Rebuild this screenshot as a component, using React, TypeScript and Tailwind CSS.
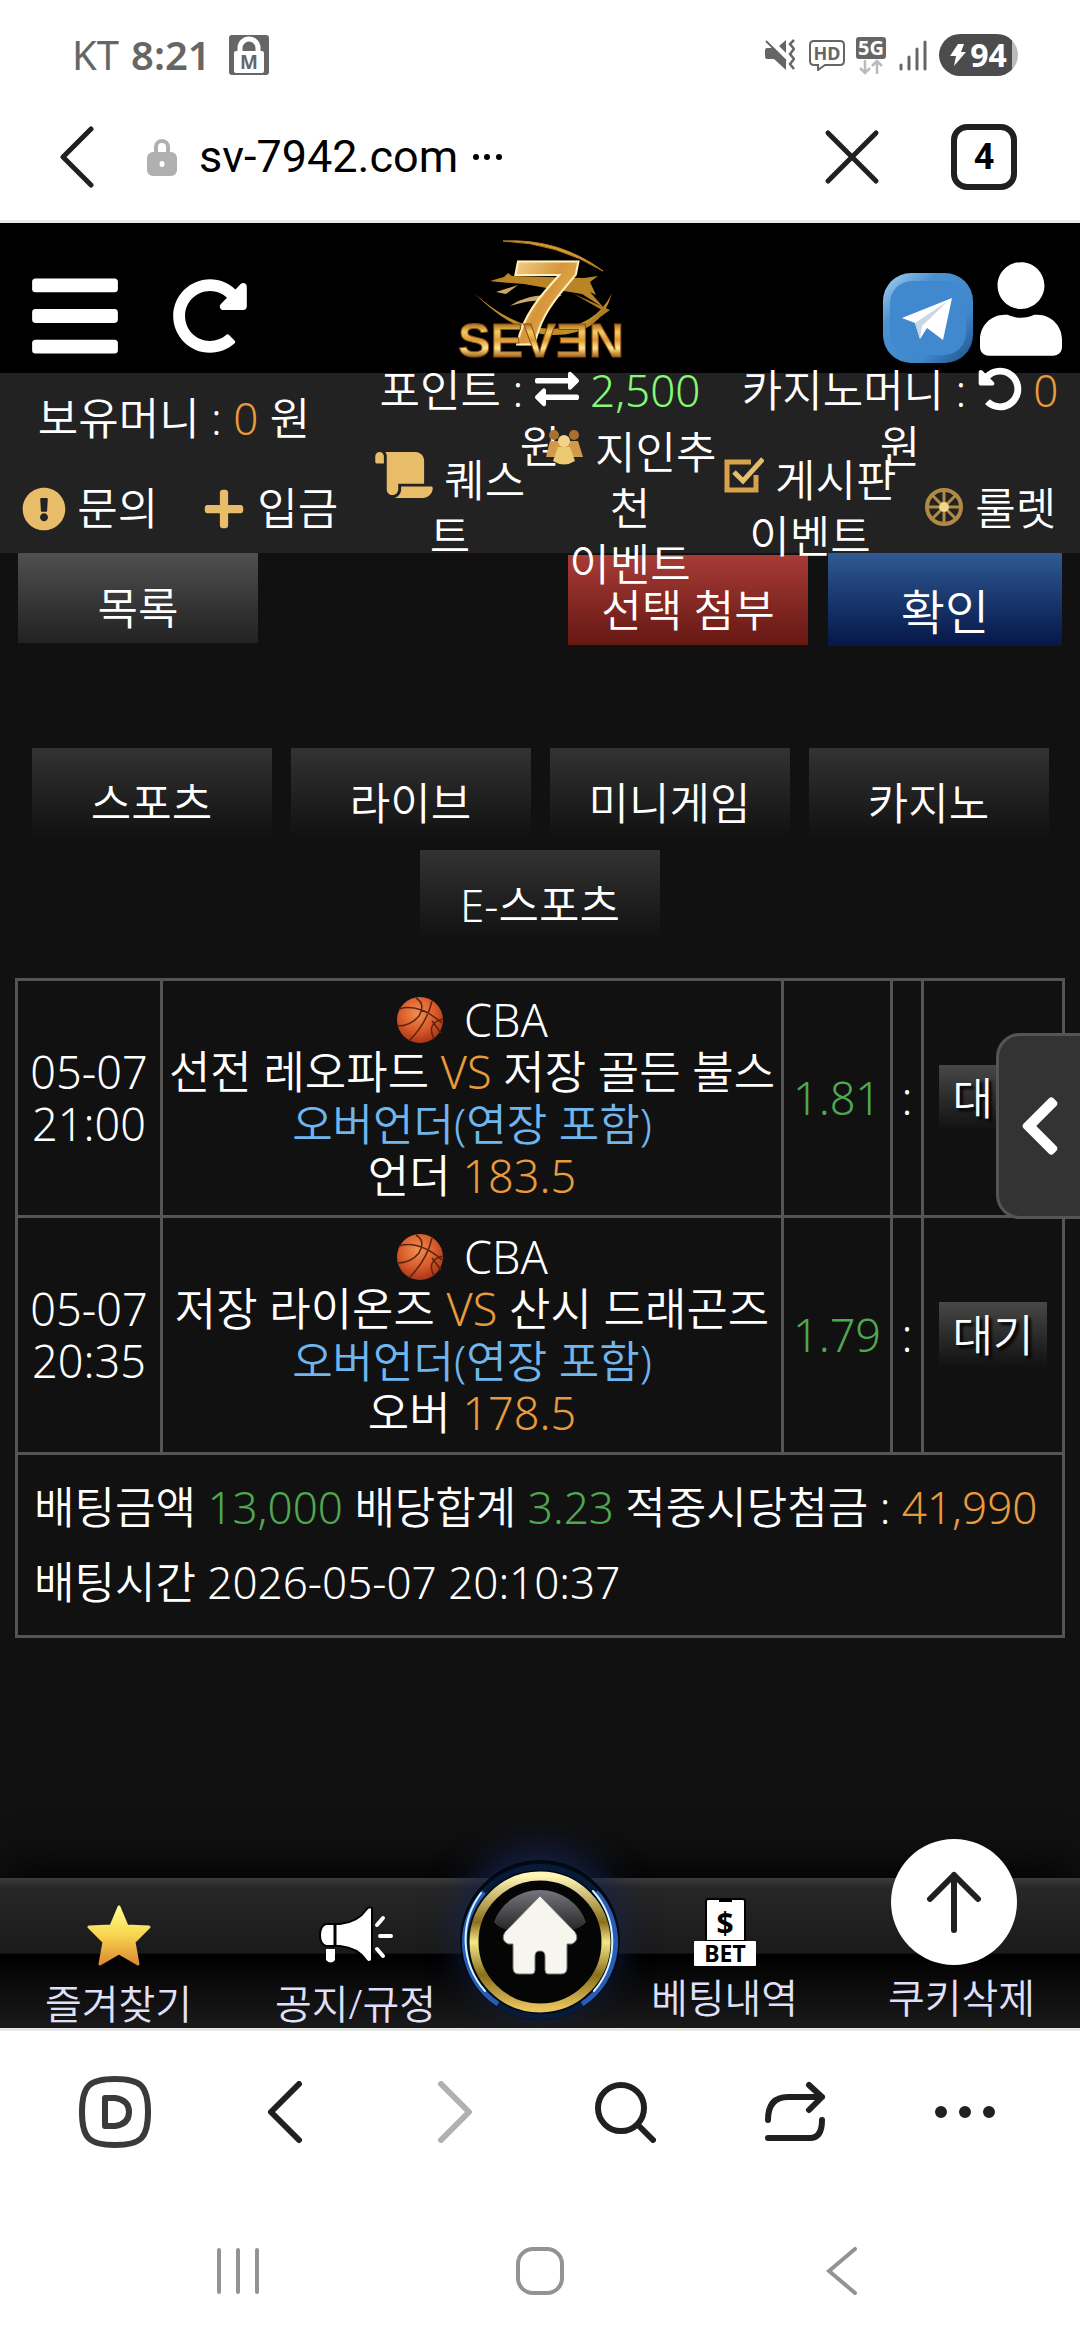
import type { ReactNode } from "react";
import {
  FaBars,
  FaChevronLeft,
  FaExchangeAlt,
  FaExclamationCircle,
  FaPlus,
  FaRedoAlt,
  FaScroll,
  FaUndoAlt,
  FaUser,
} from "react-icons/fa";

const bets = [
  {
    date: "05-07",
    time: "21:00",
    league: "CBA",
    home: "선전 레오파드",
    away: "저장 골든 불스",
    market: "오버언더(연장 포함)",
    pick: "언더",
    line: "183.5",
    odds: "1.81",
    status: "대기",
  },
  {
    date: "05-07",
    time: "20:35",
    league: "CBA",
    home: "저장 라이온즈",
    away: "산시 드래곤즈",
    market: "오버언더(연장 포함)",
    pick: "오버",
    line: "178.5",
    odds: "1.79",
    status: "대기",
  },
];

const categories = ["스포츠", "라이브", "미니게임", "카지노", "E-스포츠"];

function StatusBar() {
  return (
    <div className="flex h-[110px] items-center justify-between pr-[62px] pl-[72px] text-[#666]">
      <div className="flex items-center text-[40px] leading-[48px]">
        <span>KT</span>
        <span className="ml-3 font-semibold">8:21</span>
        <svg className="ml-[18px] size-10" viewBox="0 0 40 40">
          <rect width="40" height="40" rx="3" fill="#666" />
          <path d="M11 18v-5a9 9 0 0 1 18 0v5" fill="none" stroke="#fff" strokeWidth="5" />
          <rect x="5" y="16" width="30" height="22" rx="2" fill="#fff" />
          <text x="20" y="34" fontSize="19" fontWeight="700" textAnchor="middle" fill="#666">M</text>
        </svg>
      </div>
      <div className="flex items-center">
        <svg className="h-8 w-[30px]" viewBox="0 0 30 32" fill="#666">
          <path d="M2 9h7l12 12v10L9 20H2q-2 0-2-3v-5q0-3 2-3z" />
          <path d="M21 1v13l-7-7z" />
          <path d="M1 2l20 20" stroke="#666" strokeWidth="2" />
          <path d="M29 1l-4 4 4 5-4 5 4 5-4 5 4 5" fill="none" stroke="#666" strokeWidth="2.5" />
        </svg>
        <svg className="ml-[14px] h-8 w-9" viewBox="0 0 36 32">
          <path
            d="M5 2h26q4 0 4 4v16q0 4-4 4H16l-7 5v-5H5q-4 0-4-4V6q0-4 4-4z"
            fill="none"
            stroke="#666"
            strokeWidth="2"
          />
          <text x="18" y="21" fontSize="18" fontWeight="700" textAnchor="middle" fill="#666">HD</text>
        </svg>
        <svg className="ml-[10px] h-[39px] w-8" viewBox="0 0 32 39">
          <rect x="1" y="1" width="30" height="22" rx="3" fill="#666" />
          <text x="16" y="19" fontSize="20" fontWeight="700" textAnchor="middle" fill="#fff">5G</text>
          <path d="M10 24v13M5 32l5 5 5-5M22 38V25M17 30l5-5 5 5" fill="none" stroke="#bbb" strokeWidth="2.5" />
        </svg>
        <svg className="ml-3 h-8 w-[29px]" viewBox="0 0 29 32" stroke="#666" strokeWidth="3" strokeLinecap="round">
          <path d="M2 26v4M10 18v12M18 10v20M26 3v27" />
        </svg>
        <div className="ml-[11px] flex h-[42px] w-[79px] items-center justify-center gap-1 rounded-full bg-linear-to-r from-[#4c4c4c] from-93% to-[#bbb] to-93% text-white">
          <svg className="h-[22px] w-4" viewBox="0 0 16 22" fill="#fff">
            <path d="M8 0h6l-3 8h5L4 22l2-10H0z" />
          </svg>
          <span className="text-[32px] leading-[42px] font-bold">94</span>
        </div>
      </div>
    </div>
  );
}

function AddressBar() {
  return (
    <div className="flex h-[113px] items-center border-b-3 border-[#e8e8e8] pr-[63px] pb-4 pl-[60px] text-[#202020]">
      <button aria-label="뒤로">
        <svg className="h-[62px] w-[34px]" viewBox="0 0 34 62" fill="none" stroke="currentColor" strokeWidth="5" strokeLinecap="round" strokeLinejoin="round">
          <path d="M31 3L3 31l28 28" />
        </svg>
      </button>
      <svg className="ml-[53px] h-[38px] w-[30px]" viewBox="0 0 30 38">
        <path d="M9 16V9a6 6 0 0 1 12 0v7" fill="none" stroke="#b0b0b0" strokeWidth="4" />
        <rect y="14" width="30" height="24" rx="6" fill="#b0b0b0" />
        <ellipse cx="15" cy="26" rx="2.5" ry="3" fill="#fff" />
      </svg>
      <a href="#" className="ml-[22px] font-['Roboto',sans-serif] text-[45px] leading-[54px] text-black">
        sv-7942.com
      </a>
      <svg className="ml-[14px] h-2 w-[31px]" viewBox="0 0 31 8" fill="#000">
        <circle cx="4" cy="4" r="3" />
        <circle cx="15" cy="4" r="3" />
        <circle cx="27" cy="4" r="3" />
      </svg>
      <button aria-label="닫기" className="ml-auto">
        <svg className="size-14" viewBox="0 0 56 56" fill="none" stroke="currentColor" strokeWidth="5" strokeLinecap="round">
          <path d="M4 4l48 48M52 4L4 52" />
        </svg>
      </button>
      <button className="ml-[71px] h-[66px] w-[66px] rounded-[16px] border-6 border-[#202020] font-['Roboto',sans-serif] text-[36px] leading-[52px] font-bold text-black">
        4
      </button>
    </div>
  );
}

function Logo() {
  return (
    <svg className="h-[120px] w-[170px]" viewBox="0 0 170 120" role="img" aria-label="SEVEN">
      <defs>
        <linearGradient id="gold" x1="0" y1="0" x2="0" y2="1">
          <stop offset="0.2" stopColor="#a8701c" />
          <stop offset="0.35" stopColor="#f3cb62" />
          <stop offset="0.5" stopColor="#d99a34" />
          <stop offset="0.65" stopColor="#ffe68e" />
          <stop offset="0.8" stopColor="#a8701c" />
        </linearGradient>
        <linearGradient id="seven" x1="0" y1="0" x2="1" y2="1">
          <stop offset="0" stopColor="#ffe9a6" />
          <stop offset="0.5" stopColor="#d6953a" />
          <stop offset="1" stopColor="#f6d77c" />
        </linearGradient>
      </defs>
      <path d="M47 1q56-3 100 30-46-28-100-30z" fill="#d89c34" stroke="#b87c24" strokeWidth="1" />
      <path d="M34 41l14-4 4-4 4 3 72 2 14-2-8 6 6 13-6-3 14 16-22-14-24-4-34-6-26-2z" fill="#b88426" />
      <path d="M40 52l22-7-12 9zM54 66q18-13 52-11l-10 5q-22-1-42 6z" fill="#d0a866" />
      <path d="M18 53q40 36 78 36 44-2 60-36-12 44-62 42-36-2-76-42z" fill="#c08c28" />
      <path d="M118 54l36 16-28 20 20-20z" fill="#b07c22" />
      <text
        x="51"
        y="104"
        fontFamily="Liberation Sans"
        fontSize="120"
        fontWeight="700"
        fontStyle="italic"
        fill="url(#seven)"
        stroke="#fff0bc"
        strokeWidth="2"
      >
        7
      </text>
      <text
        x="85"
        y="117"
        fontFamily="Liberation Sans"
        fontSize="49"
        fontWeight="700"
        textAnchor="middle"
        fill="url(#gold)"
        stroke="#8f4b18"
        strokeWidth="1"
      >
        SEVƎN
      </text>
    </svg>
  );
}

function TopBar() {
  return (
    <header className="flex h-[150px] items-end justify-between bg-black pr-[18px] pl-8 text-white">
      <div className="flex items-center gap-[54px] pb-2">
        <button aria-label="메뉴">
          <FaBars className="h-[98px] w-[86px]" />
        </button>
        <button aria-label="새로고침">
          <FaRedoAlt className="size-[76px]" />
        </button>
      </div>
      <a href="#" className="pb-[13px]">
        <Logo />
      </a>
      <div className="flex items-end gap-[6px] pl-12">
        <a href="#" aria-label="텔레그램" className="mb-[9px]">
          <svg className="size-[92px]" viewBox="0 0 92 92">
            <defs>
              <linearGradient id="tile" x1="0" y1="0" x2="1" y2="1">
                <stop offset="0" stopColor="#a9d3ee" />
                <stop offset="0.3" stopColor="#4a92d2" />
                <stop offset="0.7" stopColor="#3f86cb" />
                <stop offset="1" stopColor="#1d4f80" />
              </linearGradient>
            </defs>
            <rect x="1" y="1" width="90" height="90" rx="28" fill="url(#tile)" />
            <rect x="8" y="9" width="76" height="74" rx="22" fill="#4189cf" />
            <path d="M20 46l50-20-9 42-16-12-7 11-5-16z" fill="#fff" />
            <path d="M33 51l33-22-26 25-2 13z" fill="#c8d6e6" />
          </svg>
        </a>
        <button aria-label="내 정보" className="mb-[17px]">
          <FaUser className="h-[94px] w-[82px]" />
        </button>
      </div>
    </header>
  );
}

function Quick({ children }: { children: ReactNode }) {
  return (
    <a href="#" className="block text-center whitespace-nowrap">
      {children}
    </a>
  );
}

function InfoBar() {
  return (
    <section className="relative z-10 h-[180px] bg-[#222] text-[44px] leading-[56px] font-[350] text-white">
      <div className="grid grid-cols-3 grid-rows-[90px] items-center text-center">
        <p className="pr-3">
          보유머니 : <span className="text-[#e89b3c]">0</span> 원
        </p>
        <p>
          포인트 : <FaExchangeAlt className="inline size-11 align-[-4px]" />{" "}
          <span className="text-[#86f876]">2,500</span>
          <br />원
        </p>
        <p>
          카지노머니 : <FaUndoAlt className="inline size-11 align-[-4px]" />{" "}
          <span className="text-[#e89b3c]">0</span>
          <br />원
        </p>
      </div>
      <nav className="grid grid-cols-6 grid-rows-[90px] items-center">
        <Quick>
          <FaExclamationCircle className="inline size-11 align-[-6px] text-[#e8bc68]" /> 문의
        </Quick>
        <Quick>
          <FaPlus className="inline size-11 align-[-6px] text-[#e8bc68]" /> 입금
        </Quick>
        <Quick>
          <FaScroll className="inline h-[46px] w-[58px] align-[-1px] text-[#e8bc68]" /> 퀘스
          <br />트
        </Quick>
        <Quick>
          <svg className="inline h-9 w-10 align-[4px]" viewBox="0 0 40 36">
            <circle cx="10" cy="6" r="5" fill="#a8702c" />
            <circle cx="30" cy="6" r="5" fill="#a8702c" />
            <path d="M2 28l4-16h28l5 16z" fill="#d39a4a" />
            <circle cx="20" cy="12" r="6" fill="#efd68a" />
            <path d="M9 32l5-14h12l5 14q-11 7-22 0z" fill="#ebc872" />
          </svg>{" "}
          지인추
          <br />천<br />
          이벤트
        </Quick>
        <Quick>
          <svg className="inline h-9 w-10 align-[4px]" viewBox="0 0 40 36" fill="none">
            <path d="M32 18v15H3V5h24" stroke="#d8a24c" strokeWidth="5" />
            <path d="M10 15l9 9L39 2" stroke="#e6bd6c" strokeWidth="5" />
          </svg>{" "}
          게시판
          <br />
          이벤트
        </Quick>
        <Quick>
          <svg className="inline size-10 align-[-2px]" viewBox="0 0 40 40" fill="none" stroke="#b08a44">
            <circle cx="20" cy="20" r="17" strokeWidth="4" />
            <path d="M20 3v34M3 20h34M8 8l24 24M32 8L8 32" strokeWidth="3" />
            <circle cx="20" cy="20" r="5" fill="#efd68a" stroke="none" />
          </svg>{" "}
          룰렛
        </Quick>
      </nav>
    </section>
  );
}

function Basketball() {
  return (
    <svg className="inline size-12" viewBox="0 0 48 48">
      <defs>
        <radialGradient id="ball" cx="0.45" cy="0.35" r="0.65">
          <stop offset="0" stopColor="#f09050" />
          <stop offset="0.6" stopColor="#d85a2a" />
          <stop offset="1" stopColor="#a83618" />
        </radialGradient>
      </defs>
      <circle cx="24" cy="24" r="23" fill="url(#ball)" />
      <path
        d="M3 13q20-6 43 14M20 2q10 6 3 18-8 10-22 10M13 45q18-18 23-40M38 43q-8-16 9-20M36 25l9 12"
        fill="none"
        stroke="#5a2410"
        strokeWidth="1.5"
      />
    </svg>
  );
}

function BetTable() {
  return (
    <table className="mt-[38px] w-full table-fixed border-collapse border-3 border-[#555] text-center text-[45px] [&_td]:border-3 [&_td]:border-[#555]">
      <colgroup>
        <col className="w-[145px]" />
        <col />
        <col className="w-[109px]" />
        <col className="w-[31px]" />
        <col className="w-[141px]" />
      </colgroup>
      <tbody>
        {bets.map((bet) => (
          <tr key={bet.time}>
            <td>
              {bet.date}
              <br />
              {bet.time}
            </td>
            <td className="py-[13px] whitespace-nowrap">
              <div className="flex h-[52px] items-center justify-center gap-5">
                <Basketball />
                {bet.league}
              </div>
              <div>
                {bet.home} <span className="text-[#e89b3c]">VS</span> {bet.away}
              </div>
              <div className="text-[44px] text-[#70b6ee]">{bet.market}</div>
              <div>
                {bet.pick} <span className="text-[#e89b3c]">{bet.line}</span>
              </div>
            </td>
            <td className="text-[#4fa850]">{bet.odds}</td>
            <td>:</td>
            <td>
              <button className="h-[66px] w-[108px] bg-linear-to-b from-[#484848] to-[#111] text-[44px] [text-shadow:3px_3px_3px_#000]">
                {bet.status}
              </button>
            </td>
          </tr>
        ))}
        <tr>
          <td colSpan={5} className="px-4 py-[15px] text-left text-[44px] leading-[75px] whitespace-nowrap">
            <div>
              배팅금액 <span className="text-[#4fa850]">13,000</span> 배당합계{" "}
              <span className="text-[#4fa850]">3.23</span> 적중시당첨금 :{" "}
              <span className="text-[#e89b3c]">41,990</span>
            </div>
            <div>배팅시간 2026-05-07 20:10:37</div>
          </td>
        </tr>
      </tbody>
    </table>
  );
}

function SiteNav() {
  return (
    <nav className="relative grid h-[150px] grid-cols-[237fr_237fr_132fr_237fr_237fr] bg-[linear-gradient(#3c3c3c_0%,#262626_7%,#1a1a1a_50%,#000_51%,#1a1a1a_100%)] text-[40px] leading-[48px] font-[350] text-[#e0e0fa] shadow-[0_-10px_50px_#000]">
      <a href="#" className="flex flex-col items-center justify-end">
        <svg className="h-[62px] w-16" viewBox="0 0 64 62">
          <defs>
            <linearGradient id="star" x1="0" y1="0" x2="0" y2="1">
              <stop offset="0" stopColor="#ffff8a" />
              <stop offset="0.5" stopColor="#f8d44e" />
              <stop offset="1" stopColor="#dc8a34" />
            </linearGradient>
          </defs>
          <path
            d="M32 3l8 19 22 1-15 15 4 22-19-11-19 11 4-22L2 23l22-1z"
            fill="url(#star)"
            stroke="url(#star)"
            strokeWidth="3"
            strokeLinejoin="round"
          />
        </svg>
        <span className="mt-[14px]">즐겨찾기</span>
      </a>
      <a href="#" className="flex flex-col items-center justify-end">
        <svg className="h-[62px] w-[76px]" viewBox="0 0 76 62">
          <path
            d="M8 20h14q18-2 26-14 3-4 6-2v52q-3 4-6 0-8-12-26-14H8q-6-2-6-11t6-11z"
            fill="#fff"
            stroke="#000"
            strokeWidth="2"
          />
          <path d="M17 19v24" stroke="#000" strokeWidth="3" />
          <path d="M8 45h9v11q-4 5-9 0z" fill="#fff" />
          <path d="M59 21l6-7M62 32h11M59 45l6 7" stroke="#fff" strokeWidth="4" strokeLinecap="round" />
        </svg>
        <span className="mt-[14px]">공지/규정</span>
      </a>
      <a href="#" aria-label="홈" className="relative">
        <svg className="absolute top-[-18px] left-1/2 size-[160px] -translate-x-1/2 rounded-full shadow-[0_-10px_36px_#16224c]" viewBox="0 0 160 160">
          <defs>
            <linearGradient id="ring" x1="0" y1="0" x2="0" y2="1">
              <stop offset="0" stopColor="#fff6b8" />
              <stop offset="0.35" stopColor="#8a701c" />
              <stop offset="0.5" stopColor="#f4e884" />
              <stop offset="0.75" stopColor="#8a701c" />
              <stop offset="1" stopColor="#e8c25c" />
            </linearGradient>
            <linearGradient id="gloss" x1="0" y1="0" x2="0" y2="1">
              <stop offset="0" stopColor="#77757c" />
              <stop offset="1" stopColor="#222" />
            </linearGradient>
          </defs>
          <circle cx="80" cy="80" r="80" fill="#020912" />
          <circle cx="80" cy="82" r="75" fill="none" stroke="#061a3a" strokeWidth="6" />
          <path d="M24 32a74 74 0 0 0 14 112M136 32a74 74 0 0 1-14 112" fill="none" stroke="#2a5cb4" strokeWidth="5" />
          <path d="M21 33a78 78 0 0 0 4 98M133 31a76 76 0 0 1 1 100" fill="none" stroke="#d8f4ff" strokeWidth="2" strokeLinecap="round" />
          <circle cx="80" cy="82" r="66" fill="#050506" stroke="url(#ring)" strokeWidth="9" />
          <path d="M34 62a49 49 0 0 1 92 0q-8 12-46 10-38 2-46-10z" fill="url(#gloss)" />
          <path
            d="M80 36l35 36q5 8-3 12h-5v24q0 6-6 6H88q-3 0-3-4V96q0-5-5-5t-5 5v14q0 4-3 4H59q-6 0-6-6V84h-5q-8-4-3-12z"
            fill="#f6f6ee"
            stroke="#777"
            strokeWidth="1"
          />
        </svg>
      </a>
      <a href="#" className="flex flex-col items-center justify-end">
        <svg className="h-[68px] w-[62px]" viewBox="0 0 62 68">
          <path d="M12 3q0-2 3-2h33q3 0 3 2v40H12z" fill="#fff" stroke="#000" strokeWidth="2" />
          <path d="M25 1h13v3H25z" fill="#000" />
          <rect y="43" width="62" height="25" rx="1" fill="#fff" />
          <text x="31" y="36" fontSize="30" fontWeight="700" textAnchor="middle" fill="#000">$</text>
          <text x="31" y="64" fontSize="23" fontWeight="700" textAnchor="middle" fill="#000">BET</text>
        </svg>
        <span className="mt-2 mb-[6px]">베팅내역</span>
      </a>
      <button className="flex flex-col items-center justify-end">
        <span className="mb-[6px]">쿠키삭제</span>
      </button>
      <button
        aria-label="맨 위로"
        className="absolute top-[-39px] right-[63px] flex size-[126px] items-center justify-center rounded-full bg-white"
      >
        <svg className="h-[62px] w-14" viewBox="0 0 56 62" fill="none" stroke="#202020" strokeWidth="6" strokeLinecap="round" strokeLinejoin="round">
          <path d="M28 59V4M4 28L28 4l24 24" />
        </svg>
      </button>
    </nav>
  );
}

function BrowserNav() {
  return (
    <footer className="relative border-t-3 border-[#e8e8e8] bg-white text-[#202020]">
      <div className="grid h-[162px] grid-cols-6 items-center justify-items-center px-[30px] [&_svg]:fill-none [&_svg]:stroke-current [&_svg]:stroke-[6px] [&_svg]:[stroke-linecap:round] [&_svg]:[stroke-linejoin:round]">
        <button aria-label="홈" className="text-[#3a3a3a]">
          <svg className="size-[72px]" viewBox="0 0 72 72">
            <path d="M36 3c26 0 33 7 33 33s-7 33-33 33S3 62 3 36 10 3 36 3z" />
            <path d="M26 22h10q14 2 14 14T36 50H26z" />
          </svg>
        </button>
        <button aria-label="이전">
          <svg className="h-[62px] w-9" viewBox="0 0 36 62">
            <path d="M32 3L4 31l28 28" />
          </svg>
        </button>
        <button aria-label="다음" className="text-[#b0b0b0]">
          <svg className="h-[62px] w-9" viewBox="0 0 36 62">
            <path d="M4 3l28 28L4 59" />
          </svg>
        </button>
        <button aria-label="검색">
          <svg className="h-[62px] w-[62px]" viewBox="0 0 62 62">
            <circle cx="27" cy="27" r="23" />
            <path d="M44 44l15 15" />
          </svg>
        </button>
        <button aria-label="공유">
          <svg className="h-[62px] w-[62px]" viewBox="0 0 62 62">
            <path d="M4 39q0-23 20-23h34M45 4l13 12-13 13M4 57h42q12 0 12-18" />
          </svg>
        </button>
        <button aria-label="더보기">
          <svg className="h-4 w-[62px]" viewBox="0 0 62 16">
            <path d="M7 8h0M31 8h0M55 8h0" className="stroke-[12px]" />
          </svg>
        </button>
      </div>
      <div className="grid h-[147px] grid-cols-3 items-center justify-items-center px-[87px] pt-2 text-[#939393] [&_svg]:fill-none [&_svg]:stroke-current [&_svg]:stroke-4 [&_svg]:[stroke-linecap:round]">
        <button aria-label="최근 앱">
          <svg className="h-12 w-11" viewBox="0 0 44 48">
            <path d="M3 3v42M22 3v42M41 3v42" />
          </svg>
        </button>
        <button aria-label="홈 화면">
          <svg className="size-12" viewBox="0 0 48 48">
            <rect x="2" y="2" width="44" height="44" rx="15" />
          </svg>
        </button>
        <button aria-label="뒤로 가기">
          <svg className="h-12 w-8" viewBox="0 0 32 48">
            <path d="M29 2L3 24l26 22" />
          </svg>
        </button>
      </div>
    </footer>
  );
}

export default function App() {
  return (
    <div className="flex min-h-screen flex-col bg-white font-['Noto_Sans','Noto_Sans_CJK_KR',sans-serif]">
      <StatusBar />
      <AddressBar />
      <TopBar />
      <InfoBar />
      <main className="relative flex-1 bg-[#111] text-[44px] leading-[52px] font-[350] text-white">
        <div className="flex px-[18px]">
          <button className="h-[90px] w-[240px] bg-linear-to-b from-[#505050] to-[#222] pt-5">목록</button>
          <button className="mt-[2px] ml-auto h-[90px] w-[240px] bg-linear-to-b from-[#a83b36] to-[#661813] pt-5">
            선택 첨부
          </button>
          <button className="ml-5 h-[93px] w-[234px] bg-linear-to-b from-[#2f5a94] to-[#071748] pt-6 text-[48px]">
            확인
          </button>
        </div>
        <div className="mt-[102px] flex flex-wrap justify-center gap-x-[19px] gap-y-3 px-[15px]">
          {categories.map((name) => (
            <button key={name} className="h-[90px] w-[240px] bg-linear-to-b from-[#333] to-[#111] pt-5">
              {name}
            </button>
          ))}
        </div>
        <div className="px-[15px]">
          <BetTable />
        </div>
        <button
          aria-label="패널 열기"
          className="absolute top-[480px] right-0 flex h-[186px] w-21 items-center justify-center rounded-l-[24px] border-3 border-r-0 border-[#555] bg-[#333]"
        >
          <FaChevronLeft className="h-[68px] w-[42px]" />
        </button>
      </main>
      <SiteNav />
      <BrowserNav />
    </div>
  );
}
